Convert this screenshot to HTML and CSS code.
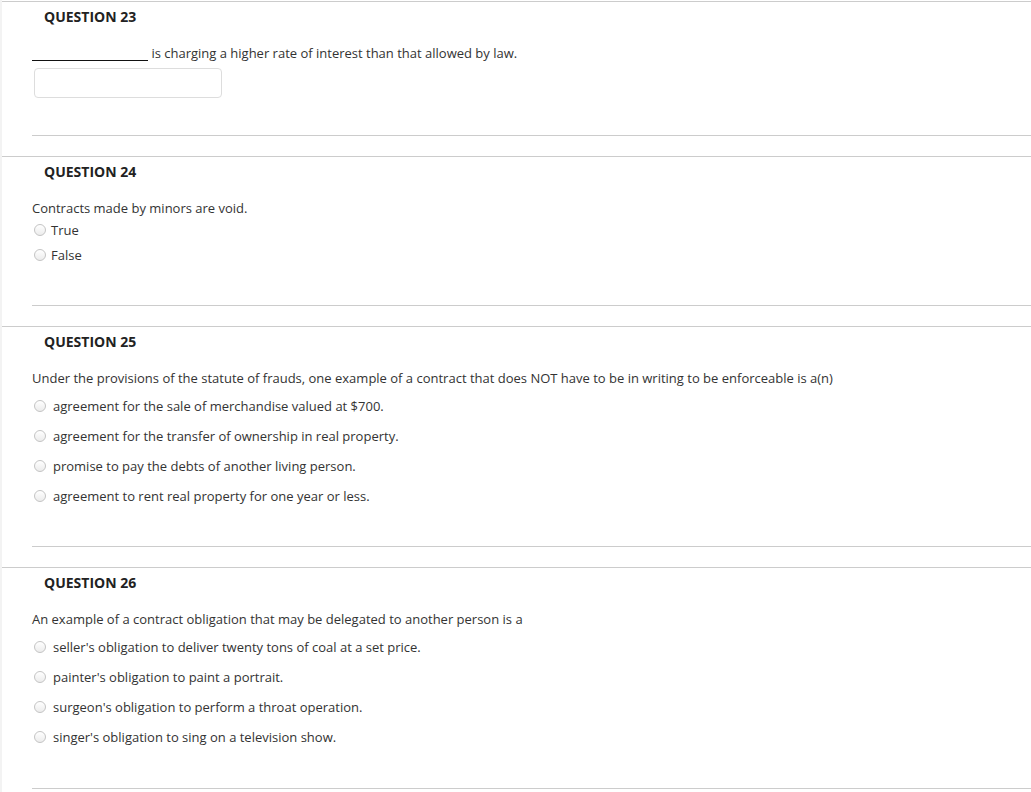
FILE: index.html
```html
<!DOCTYPE html>
<html lang="en">
<head>
<meta charset="utf-8">
<title>Questions</title>
<link rel="stylesheet" href="styles.css">
</head>
<body>
<div class="page">

  <div class="question">
    <div class="q-title">QUESTION 23</div>
    <div class="q-body">
      <p class="q-text"><span class="blank"></span> is charging a higher rate of interest than that allowed by law.</p>
      <input class="answer-input" type="text" aria-label="answer">
    </div>
    <div class="q-foot foot-23"></div>
  </div>

  <div class="question">
    <div class="q-title">QUESTION 24</div>
    <div class="q-body">
      <p class="q-text">Contracts made by minors are void.</p>
      <ul class="options tight">
        <li><span class="radio"></span>True</li>
        <li><span class="radio"></span>False</li>
      </ul>
    </div>
    <div class="q-foot foot-24"></div>
  </div>

  <div class="question">
    <div class="q-title">QUESTION 25</div>
    <div class="q-body">
      <p class="q-text">Under the provisions of the statute of frauds, one example of a contract that does NOT have to be in writing to be enforceable is a(n)</p>
      <ul class="options wide">
        <li><span class="radio"></span>agreement for the sale of merchandise valued at $700.</li>
        <li><span class="radio"></span>agreement for the transfer of ownership in real property.</li>
        <li><span class="radio"></span>promise to pay the debts of another living person.</li>
        <li><span class="radio"></span>agreement to rent real property for one year or less.</li>
      </ul>
    </div>
    <div class="q-foot foot-25"></div>
  </div>

  <div class="question">
    <div class="q-title">QUESTION 26</div>
    <div class="q-body">
      <p class="q-text">An example of a contract obligation that may be delegated to another person is a</p>
      <ul class="options wide">
        <li><span class="radio"></span>seller's obligation to deliver twenty tons of coal at a set price.</li>
        <li><span class="radio"></span>painter's obligation to paint a portrait.</li>
        <li><span class="radio"></span>surgeon's obligation to perform a throat operation.</li>
        <li><span class="radio"></span>singer's obligation to sing on a television show.</li>
      </ul>
    </div>
    <div class="q-foot foot-26"></div>
  </div>

</div>
</body>
</html>
```
FILE: styles.css
```css
html, body {
  margin: 0;
  padding: 0;
  background: #ffffff;
}

body {
  font-family: "Open Sans", "Liberation Sans", sans-serif;
  font-size: 13px;
  line-height: 18px;
  color: #333333;
}

.page {
  border-left: 2px solid #f3f3f3;
  padding-top: 1px;
  min-height: 791px;
}

.question {
  border-top: 1px solid #cccccc;
  padding-top: 6px;
}

.q-title {
  padding-left: 42px;
  font-size: 14px;
  font-weight: 700;
  color: #222222;
  line-height: 18px;
}

.q-body {
  padding-left: 30px;
  margin-top: 18px;
}

.q-text {
  margin: 0;
  line-height: 18px;
}

.blank {
  display: inline-block;
  width: 116px;
  height: 16px;
  border-bottom: 1px solid #111111;
  vertical-align: top;
}

.answer-input {
  display: block;
  box-sizing: border-box;
  margin: 6px 0 0 2px;
  width: 188px;
  height: 30px;
  border: 1px solid #dddddd;
  border-radius: 4px;
  background: #ffffff;
  padding: 0 6px;
  font: inherit;
}

.options {
  list-style: none;
  margin: 0;
  padding: 0;
}

.options li {
  display: flex;
  align-items: center;
  gap: 5px;
  padding-left: 2px;
}

.options.tight li {
  height: 25px;
}

.options.wide {
  margin-top: 4px;
}

.options.wide li {
  height: 30px;
  gap: 7px;
}

.radio {
  box-sizing: border-box;
  width: 12px;
  height: 12px;
  border-radius: 50%;
  border: 1px solid #c4c4c4;
  background: linear-gradient(#ffffff, #ececec);
  flex: none;
}

.q-foot {
  margin-left: 30px;
  border-top: 1px solid #cccccc;
  margin-bottom: 20px;
}

.foot-23 { margin-top: 37px; }
.foot-24 { margin-top: 38px; }
.foot-25 { margin-top: 35px; }
.foot-26 { margin-top: 36px; }
```
